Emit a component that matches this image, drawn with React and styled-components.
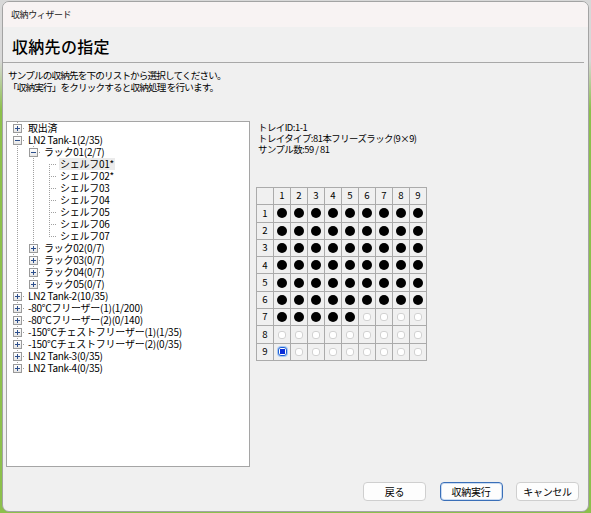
import React from "react";
import styled, { createGlobalStyle, css } from "styled-components";

const Global = createGlobalStyle`
  html, body { margin: 0; padding: 0; }
  body {
    width: 591px; height: 513px; overflow: hidden;
    background: linear-gradient(to bottom, #d8d8d8 0, #d8d8d8 60px, #8cc04c 110px, #8cc04c 100%);
    font-family: "Noto Sans CJK JP", "Noto Sans", sans-serif;
    color: #000;
  }
  #root { width: 591px; }
`;

const Window = styled.div`
  margin: 1px 2px 0 2px;
  width: 585px;
  height: 509px;
  border: 1px solid #a3a3a3;
  border-radius: 7px;
  overflow: hidden;
  background: #f0f0f0;
  display: flex;
  flex-direction: column;
`;

const TitleBar = styled.div`
  height: 25px;
  flex: none;
  display: flex;
  align-items: center;
  padding-left: 8px;
  background: #f8f3f3;
  font-size: 9px;
  letter-spacing: -0.4px;
  color: #222;
`;

const Heading = styled.h1`
  margin: 9px 0 0 9px;
  height: 20px;
  line-height: 20px;
  font-size: 16px;
  font-weight: 500;
  letter-spacing: 0.3px;
`;

const Separator = styled.hr`
  margin: 6px 4px 0 0;
  border: none;
  border-top: 1px solid #a8a8a8;
  height: 0;
`;

const Description = styled.div`
  margin: 6px 0 0 5px;
  font-size: 9.6px;
  letter-spacing: -0.85px;
  line-height: 12px;
  height: 24px;
  white-space: pre;
`;

const Body = styled.div`
  margin-top: 28px;
  display: flex;
  gap: 8px;
  padding-left: 3px;
`;

const TreeBox = styled.div`
  width: 240px;
  height: 344px;
  flex: none;
  background: #fff;
  border: 1px solid #a5a5a5;
  padding-left: 2px;
  box-sizing: content-box;
  display: flex;
  flex-direction: column;
`;

const Row = styled.div`
  display: flex;
  height: 12px;
  align-items: stretch;
`;

const Gutter = styled.div`
  width: 16px;
  flex: none;
  position: relative;
  background-repeat: no-repeat;
  ${({ $v }) =>
    $v === "vert" &&
    css`
      background-image: repeating-linear-gradient(to bottom, #a0a0a0 0 1px, transparent 1px 2px);
      background-size: 1px 12px;
      background-position: 8px 0;
    `}
  ${({ $v }) =>
    $v === "tee" &&
    css`
      background-image: repeating-linear-gradient(to bottom, #a0a0a0 0 1px, transparent 1px 2px),
        repeating-linear-gradient(to right, #a0a0a0 0 1px, transparent 1px 2px);
      background-size: 1px 12px, 8px 1px;
      background-position: 8px 0, 8px 6px;
    `}
  ${({ $v }) =>
    $v === "corner" &&
    css`
      background-image: repeating-linear-gradient(to bottom, #a0a0a0 0 1px, transparent 1px 2px),
        repeating-linear-gradient(to right, #a0a0a0 0 1px, transparent 1px 2px);
      background-size: 1px 7px, 8px 1px;
      background-position: 8px 0, 8px 6px;
    `}
  ${({ $v }) =>
    $v === "top" &&
    css`
      background-image: repeating-linear-gradient(to right, #a0a0a0 0 1px, transparent 1px 2px),
        repeating-linear-gradient(to bottom, #a0a0a0 0 1px, transparent 1px 2px);
      background-size: 8px 1px, 1px 6px;
      background-position: 8px 6px, 8px 6px;
    `}
`;

const Expander = styled.span`
  position: absolute;
  left: 4px;
  top: 2px;
  width: 7px;
  height: 7px;
  border: 1px solid #9a9a9a;
  background: linear-gradient(#ffffff, #e6e6e6);
  &::before {
    content: "";
    position: absolute;
    left: 1px;
    top: 3px;
    width: 5px;
    height: 1px;
    background: #2d4f8c;
  }
  ${({ $open }) =>
    !$open &&
    css`
      &::after {
        content: "";
        position: absolute;
        left: 3px;
        top: 1px;
        width: 1px;
        height: 5px;
        background: #2d4f8c;
      }
    `}
`;

const Label = styled.span`
  margin-left: 2px;
  padding: 0 1px;
  font-size: 10px;
  letter-spacing: -0.25px;
  line-height: 12px;
  white-space: pre;
  background: ${({ $sel }) => ($sel ? "#ebebeb" : "transparent")};
`;

const RightPanel = styled.div`
  display: flex;
  flex-direction: column;
  padding-top: 1px;
`;

const Info = styled.div`
  font-size: 9.4px;
  letter-spacing: -0.5px;
  line-height: 11px;
  white-space: pre;
  height: 33px;
`;

const Grid = styled.div`
  margin-top: 32px;
  margin-left: -2px;
  display: grid;
  grid-template-columns: repeat(10, 16px);
  grid-auto-rows: 16.3px;
  gap: 1px;
  padding: 1px;
  background: #ababab;
  width: max-content;
`;

const Cell = styled.div`
  background: #f0f0f0;
  display: flex;
  align-items: center;
  justify-content: center;
  font-size: 9.6px;
  line-height: 1;
`;

const Dot = styled.span`
  width: 10px;
  height: 10px;
  border-radius: 50%;
  background: #000;
`;

const Empty = styled.span`
  width: 8px;
  height: 8px;
  border-radius: 3px;
  border: 1px solid #d2d2d2;
  background: #fff;
  box-sizing: border-box;
`;

const Selected = styled.span`
  width: 9px;
  height: 9px;
  border-radius: 3px;
  border: 1px solid #1f5fd6;
  box-shadow: 0 0 0 1px #a9c9f2;
  background: #fff;
  box-sizing: border-box;
  display: flex;
  align-items: center;
  justify-content: center;
  &::after {
    content: "";
    width: 5px;
    height: 5px;
    background: #0a2bd8;
  }
`;

const Footer = styled.div`
  margin-top: 15px;
  display: flex;
  justify-content: flex-end;
  gap: 13.5px;
  padding-right: 9px;
`;

const Button = styled.button`
  width: 63px;
  height: 19px;
  padding: 0;
  font-family: inherit;
  font-size: 10px;
  letter-spacing: -0.3px;
  color: #000;
  background: #fdfdfd;
  border: 1px solid ${({ $default }) => ($default ? "#3a6fb8" : "#cfcfcf")};
  box-shadow: ${({ $default }) => ($default ? "inset 0 0 0 1px #c9dbf2" : "none")};
  border-radius: 4px;
`;

const tree = [
  { g: ["tee"], exp: "closed", text: "取出済" },
  { g: ["tee"], exp: "open", text: "LN2 Tank-1(2/35)" },
  { g: ["vert", "tee"], exp: "open", text: "ラック01(2/7)" },
  { g: ["vert", "vert", "top"], text: "シェルフ01*", sel: true },
  { g: ["vert", "vert", "tee"], text: "シェルフ02*" },
  { g: ["vert", "vert", "tee"], text: "シェルフ03" },
  { g: ["vert", "vert", "tee"], text: "シェルフ04" },
  { g: ["vert", "vert", "tee"], text: "シェルフ05" },
  { g: ["vert", "vert", "tee"], text: "シェルフ06" },
  { g: ["vert", "vert", "corner"], text: "シェルフ07" },
  { g: ["vert", "tee"], exp: "closed", text: "ラック02(0/7)" },
  { g: ["vert", "tee"], exp: "closed", text: "ラック03(0/7)" },
  { g: ["vert", "tee"], exp: "closed", text: "ラック04(0/7)" },
  { g: ["vert", "corner"], exp: "closed", text: "ラック05(0/7)" },
  { g: ["tee"], exp: "closed", text: "LN2 Tank-2(10/35)" },
  { g: ["tee"], exp: "closed", text: "-80℃フリーザー(1)(1/200)" },
  { g: ["tee"], exp: "closed", text: "-80℃フリーザー(2)(0/140)" },
  { g: ["tee"], exp: "closed", text: "-150℃チェストフリーザー(1)(1/35)" },
  { g: ["tee"], exp: "closed", text: "-150℃チェストフリーザー(2)(0/35)" },
  { g: ["tee"], exp: "closed", text: "LN2 Tank-3(0/35)" },
  { g: ["corner"], exp: "closed", text: "LN2 Tank-4(0/35)" },
];

function cellState(r, c) {
  const idx = (r - 1) * 9 + c;
  if (idx <= 59) return "dot";
  if (r === 9 && c === 1) return "sel";
  return "empty";
}

export default function App() {
  const cells = [];
  for (let r = 0; r <= 9; r++) {
    for (let c = 0; c <= 9; c++) {
      let content = null;
      if (r === 0 && c > 0) content = c;
      else if (c === 0 && r > 0) content = r;
      else if (r > 0 && c > 0) {
        const s = cellState(r, c);
        content = s === "dot" ? <Dot /> : s === "sel" ? <Selected /> : <Empty />;
      }
      cells.push(<Cell key={`${r}-${c}`}>{content}</Cell>);
    }
  }

  return (
    <>
      <Global />
      <Window>
        <TitleBar>収納ウィザード</TitleBar>
        <Heading>収納先の指定</Heading>
        <Separator />
        <Description>
          {"サンプルの収納先を下のリストから選択してください。\n「収納実行」をクリックすると収納処理 を行います。"}
        </Description>
        <Body>
          <TreeBox>
            {tree.map((n, i) => (
              <Row key={i}>
                {n.g.map((g, j) => (
                  <Gutter key={j} $v={g}>
                    {j === n.g.length - 1 && n.exp && <Expander $open={n.exp === "open"} />}
                  </Gutter>
                ))}
                <Label $sel={n.sel}>{n.text}</Label>
              </Row>
            ))}
          </TreeBox>
          <RightPanel>
            <Info>{"トレイID:1-1\nトレイタイプ:81本フリーズラック(9×9)\nサンプル数:59 / 81"}</Info>
            <Grid>{cells}</Grid>
          </RightPanel>
        </Body>
        <Footer>
          <Button>戻る</Button>
          <Button $default>収納実行</Button>
          <Button>キャンセル</Button>
        </Footer>
      </Window>
    </>
  );
}
